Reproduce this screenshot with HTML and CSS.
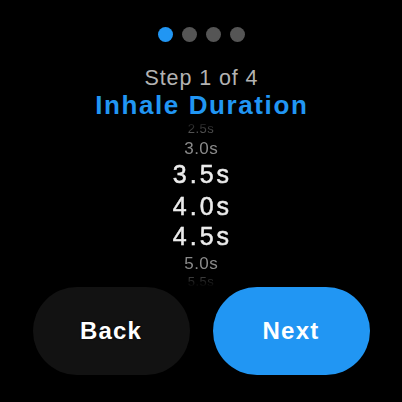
FILE: index.html
```html
<!DOCTYPE html>
<html lang="en">
<head>
  <meta charset="UTF-8" />
  <meta name="viewport" content="width=device-width, initial-scale=1.0"/>
  <title>Inhale Duration</title>
  <link rel="stylesheet" href="styles.css">
</head>
<body>
  <div class="screen">
    <div class="dots">
      <span class="dot active"></span>
      <span class="dot"></span>
      <span class="dot"></span>
      <span class="dot"></span>
    </div>

    <div class="step">Step 1 of 4</div>
    <h1 class="title">Inhale Duration</h1>

    <div class="picker">
      <div class="item far s1">2.5s</div>
      <div class="item near s2">3.0s</div>
      <div class="item sel s3">3.5s</div>
      <div class="item sel s4">4.0s</div>
      <div class="item sel s5">4.5s</div>
      <div class="item near s6">5.0s</div>
      <div class="item far s7">5.5s</div>
    </div>

    <div class="actions">
      <button class="btn back">Back</button>
      <button class="btn next">Next</button>
    </div>
  </div>
</body>
</html>
```
FILE: styles.css
```css
body {
  margin: 0;
  background: #000;
  font-family: 'Liberation Sans', Arial, sans-serif;
  color: #fff;
}

.screen {
  width: 402px;
  height: 402px;
  padding-top: 27px;
  box-sizing: border-box;
  display: flex;
  flex-direction: column;
  align-items: center;
  overflow: hidden;
}

.dots {
  display: flex;
  gap: 9px;
}

.dot {
  width: 15px;
  height: 15px;
  border-radius: 50%;
  background: #555;
}

.dot.active {
  background: #2196f3;
}

.step {
  margin-top: 24px;
  font-size: 21.5px;
  line-height: 24px;
  letter-spacing: 0.9px;
  padding-left: 0.9px;
  color: #b3b3b3;
}

.title {
  margin: 2px 0 0;
  font-size: 26px;
  line-height: 27px;
  font-weight: bold;
  letter-spacing: 1.6px;
  padding-left: 1.6px;
  color: #2196f3;
}

.picker {
  width: 160px;
  height: 168px;
  overflow: hidden;
  text-align: center;
  -webkit-mask-image: linear-gradient(to bottom, transparent 0, #000 14px, #000 154px, transparent 168px);
  mask-image: linear-gradient(to bottom, transparent 0, #000 14px, #000 154px, transparent 168px);
}

.item {
  white-space: nowrap;
}

.item.far {
  font-size: 13px;
  color: #555;
  letter-spacing: 0.5px;
}

.item.near {
  font-size: 17px;
  color: #8a8a8a;
  letter-spacing: 0.5px;
  padding-left: 0.5px;
}

.item.sel {
  font-size: 25px;
  color: #ececec;
  letter-spacing: 3px;
  padding-left: 3px;
  -webkit-text-stroke: 0.5px #ececec;
  text-shadow: 0 0 2px #000, 0 1px 2px #000;
}

.s1 { height: 20px; line-height: 20px; }
.s2 { height: 19px; line-height: 19px; }
.s3 { height: 32px; line-height: 32px; }
.s4 { height: 32px; line-height: 32px; }
.s5 { height: 28px; line-height: 28px; }
.s6 { height: 27px; line-height: 27px; }
.s7 { height: 10px; line-height: 10px; }

.actions {
  display: flex;
  gap: 23px;
}

.btn {
  width: 157px;
  height: 88px;
  border: none;
  border-radius: 44px;
  font-family: inherit;
  font-size: 24px;
  font-weight: bold;
  letter-spacing: 1.2px;
  color: #fff;
  cursor: pointer;
}

.btn.back {
  background: #121212;
  text-shadow: 0 0 2px #000;
}

.btn.next {
  background: #2196f3;
}
```
